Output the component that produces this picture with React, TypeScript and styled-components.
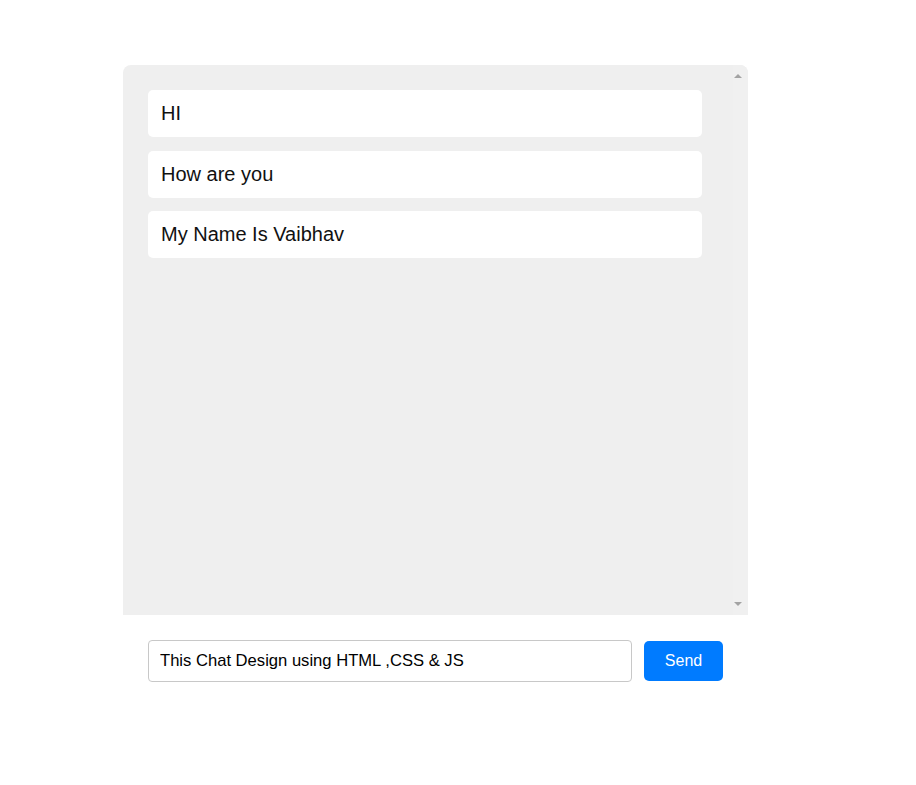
import React from "react";
import styled, { createGlobalStyle } from "styled-components";

const GlobalStyle = createGlobalStyle`
  html, body {
    margin: 0;
    padding: 0;
    background: #ffffff;
    font-family: "Liberation Sans", Arial, sans-serif;
  }
`;

const Page = styled.div`
  padding: 65px 0 0 123px;
`;

const ChatBox = styled.div`
  box-sizing: border-box;
  width: 625px;
  height: 550px;
  background: #efefef;
  border-radius: 8px 8px 0 0;
  display: flex;
  overflow: hidden;
`;

const MessageList = styled.div`
  flex: 1;
  box-sizing: border-box;
  padding: 25px;
  display: flex;
  flex-direction: column;
  gap: 13.5px;
`;

const ScrollTrack = styled.div`
  box-sizing: border-box;
  width: 15px;
  padding: 9px 0 9px 1px;
  background: #f0f0f0;
  display: flex;
  flex-direction: column;
  justify-content: space-between;
  align-items: flex-start;
`;

const Arrow = styled.svg`
  display: block;
  width: 8px;
  height: 4px;
`;

const Message = styled.div`
  box-sizing: border-box;
  width: 554px;
  background: #ffffff;
  border-radius: 5px;
  padding: 12px 13px;
  font-size: 20px;
  line-height: 23px;
  color: #111111;
`;

const InputRow = styled.div`
  display: flex;
  align-items: center;
  gap: 12px;
  padding: 25px 0 0 25px;
`;

const TextInput = styled.input`
  box-sizing: border-box;
  width: 484px;
  height: 42px;
  border: 1px solid #c8c8c8;
  border-radius: 4px;
  padding: 0 10px 0 11px;
  font-family: "Liberation Sans", Arial, sans-serif;
  font-size: 16.6px;
  color: #000000;
  outline: none;
`;

const SendButton = styled.button`
  box-sizing: border-box;
  width: 79px;
  height: 40px;
  border: none;
  border-radius: 5px;
  background: #007bff;
  color: #ffffff;
  font-family: "Liberation Sans", Arial, sans-serif;
  font-size: 16px;
  cursor: pointer;
`;

const messages = ["HI", "How are you", "My Name Is Vaibhav"];

export default function App() {
  return (
    <>
      <GlobalStyle />
      <Page>
        <ChatBox>
          <MessageList>
            {messages.map((m) => (
              <Message key={m}>{m}</Message>
            ))}
          </MessageList>
          <ScrollTrack>
            <Arrow viewBox="0 0 8 4">
              <polygon points="4,0 8,4 0,4" fill="#a3a3a3" />
            </Arrow>
            <Arrow viewBox="0 0 8 4">
              <polygon points="0,0 8,0 4,4" fill="#a3a3a3" />
            </Arrow>
          </ScrollTrack>
        </ChatBox>
        <InputRow>
          <TextInput defaultValue="This Chat Design using HTML ,CSS & JS" />
          <SendButton>Send</SendButton>
        </InputRow>
      </Page>
    </>
  );
}
